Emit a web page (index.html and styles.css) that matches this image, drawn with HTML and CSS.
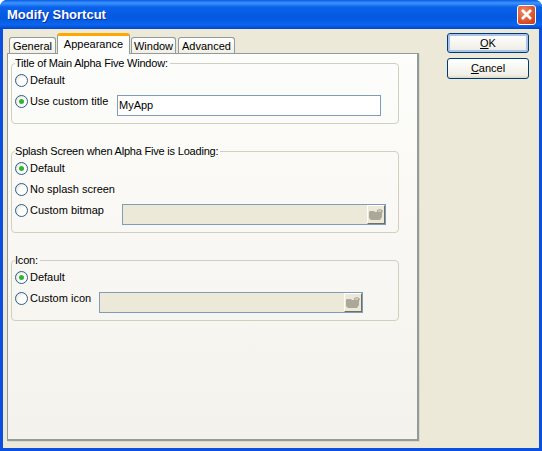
FILE: index.html
```html
<!DOCTYPE html>
<html lang="en">

<head>
    <meta charset="UTF-8">
    <title>Modify Shortcut</title>
    <link rel="stylesheet" href="styles.css">
</head>

<body>
    <div class="window">
        <div class="titlebar">
            <span class="title">Modify Shortcut</span>
            <span class="close">
                <svg width="13" height="13" viewBox="0 0 13 13">
                    <path d="M2 2 L11 11 M11 2 L2 11" stroke="#fff" stroke-width="2.6" fill="none" />
                </svg>
            </span>
        </div>
        <div class="content">
            <div class="main">
                <div class="tabs">
                    <div class="tab tab-general">General</div>
                    <div class="tab tab-active">Appearance</div>
                    <div class="tab tab-window">Window</div>
                    <div class="tab tab-advanced">Advanced</div>
                </div>
                <div class="panel">
                    <fieldset class="group">
                        <legend>Title of Main Alpha Five Window:</legend>
                        <div class="row"><span class="radio"></span><span>Default</span></div>
                        <div class="row">
                            <span class="radio checked"></span><span>Use custom title</span>
                            <input type="text" class="textbox" value="MyApp">
                        </div>
                    </fieldset>
                    <fieldset class="group">
                        <legend>Splash Screen when Alpha Five is Loading:</legend>
                        <div class="row"><span class="radio checked"></span><span>Default</span></div>
                        <div class="row"><span class="radio"></span><span>No splash screen</span></div>
                        <div class="row">
                            <span class="radio"></span><span>Custom bitmap</span>
                            <div class="picker picker-bitmap">
                                <button class="browse">
                                    <svg width="14" height="13" viewBox="0 0 14 13">
                                        <path d="M0 4 L1 3 L5 3 L6 4 L8 4 L8 2 L11 1 L13 2 L14 3 L13 5 L13 9 L11 12 L2 12 L0 10 Z" fill="#aca899" />
                                        <path d="M9 3 L12 3" stroke="#ece9d8" fill="none" />
                                    </svg>
                                </button>
                            </div>
                        </div>
                    </fieldset>
                    <fieldset class="group">
                        <legend>Icon:</legend>
                        <div class="row"><span class="radio checked"></span><span>Default</span></div>
                        <div class="row">
                            <span class="radio"></span><span>Custom icon</span>
                            <div class="picker picker-icon">
                                <button class="browse">
                                    <svg width="14" height="13" viewBox="0 0 14 13">
                                        <path d="M0 4 L1 3 L5 3 L6 4 L8 4 L8 2 L11 1 L13 2 L14 3 L13 5 L13 9 L11 12 L2 12 L0 10 Z" fill="#aca899" />
                                        <path d="M9 3 L12 3" stroke="#ece9d8" fill="none" />
                                    </svg>
                                </button>
                            </div>
                        </div>
                    </fieldset>
                </div>
            </div>
            <div class="side">
                <button class="btn btn-default"><u>O</u>K</button>
                <button class="btn btn-cancel"><u>C</u>ancel</button>
            </div>
        </div>
    </div>
</body>

</html>
```

FILE: styles.css
```css
html,
body {
    margin: 0;
    padding: 0;
    background: #fff;
}

body {
    font-family: "Liberation Sans", Arial, sans-serif;
    font-size: 11px;
    line-height: 13px;
    color: #000;
}

.window {
    width: 542px;
    height: 451px;
    box-sizing: border-box;
    display: flex;
    flex-direction: column;
    border-radius: 7px 7px 0 0;
    overflow: hidden;
    background: #0a4fe0;
}

.titlebar {
    height: 29px;
    flex: none;
    display: flex;
    align-items: center;
    justify-content: space-between;
    padding: 0 6px 0 7px;
    background: linear-gradient(to bottom, #0a5be4 0, #3d95ff 3px, #0a62ea 7px, #0558e0 18px, #0a66f0 25px, #0443c4 29px);
}

.title {
    color: #fff;
    font-weight: bold;
    font-size: 13px;
    text-shadow: 1px 1px 0 #0a2f9c;
}

.close {
    width: 19px;
    height: 20px;
    box-sizing: border-box;
    display: flex;
    align-items: center;
    justify-content: center;
    border: 1px solid #fff;
    border-radius: 3px;
    background: radial-gradient(circle at 35% 30%, #ee8a68, #d9502a 65%, #c23a18);
}

.content {
    flex: 1;
    display: flex;
    margin: 0 3px 3px;
    padding: 4px 4px 0 4px;
    background: #ece9d8;
}

.main {
    width: 412px;
    flex: none;
}

.tabs {
    display: flex;
    align-items: flex-end;
    height: 20px;
    padding-left: 2px;
}

.tab {
    height: 16px;
    box-sizing: border-box;
    border: 1px solid #919b9c;
    border-bottom: 0;
    border-radius: 3px 3px 0 0;
    background: linear-gradient(to bottom, #fff, #f1efe4);
    text-align: center;
    line-height: 16px;
    margin-right: 2px;
}

.tab-general {
    width: 47px;
    margin-right: 1px;
}

.tab-active {
    width: 73px;
    height: 21px;
    line-height: 17px;
    border-top: 3px solid #ffa800;
    background: #fdfdfb;
    position: relative;
    margin-bottom: -1px;
    margin-right: 1px;
}

.tab-window {
    width: 45px;
}

.tab-advanced {
    width: 57px;
}

.panel {
    height: 388px;
    box-sizing: border-box;
    border: 1px solid #919b9c;
    border-right: 2px solid #919b9c;
    border-bottom: 2px solid #919b9c;
    background: linear-gradient(to bottom, #fdfdfb 0, #f4f2ec 100%);
    padding: 3px 18px 0 3px;
    box-shadow: 1px 1px 0 #dcd9c8;
}

.group {
    margin: 0 0 21px;
    padding: 0 0 11px 3px;
    border: 1px solid #d0d0bf;
    border-radius: 4px;
    min-inline-size: 0;
}

.group legend {
    padding: 0 2px 0 0;
    line-height: 13px;
    letter-spacing: -0.2px;
}

.row {
    display: flex;
    align-items: center;
    height: 21px;
    gap: 2px;
}

.radio {
    width: 13px;
    height: 13px;
    box-sizing: border-box;
    flex: none;
    border: 1px solid #2c5f8a;
    border-radius: 50%;
    background: radial-gradient(circle at 65% 65%, #fff 40%, #d8d5c8);
    display: flex;
    align-items: center;
    justify-content: center;
}

.radio.checked::after {
    content: "";
    width: 5px;
    height: 5px;
    border-radius: 50%;
    background: #2fb52f;
}

.textbox {
    width: 264px;
    height: 21px;
    box-sizing: border-box;
    border: 1px solid #7f9db9;
    background: #fff;
    font: inherit;
    padding: 0 1px;
    margin: 7px 17px 0 auto;
    outline: none;
}

.picker {
    width: 264px;
    height: 21px;
    box-sizing: border-box;
    border: 1px solid #7f9db9;
    background: #ece9d8;
    display: flex;
    justify-content: flex-end;
    margin-top: 7px;
    margin-left: auto;
}

.picker-bitmap {
    margin-right: 12px;
}

.picker-icon {
    margin-right: 35px;
}

.browse {
    width: 18px;
    height: 19px;
    padding: 0;
    box-sizing: border-box;
    border: 1px solid;
    border-color: #fff #716f64 #716f64 #fff;
    background: #ece9d8;
    display: flex;
    align-items: center;
    justify-content: center;
}

.side {
    margin-left: 28px;
    display: flex;
    flex-direction: column;
    gap: 5px;
}

.btn {
    width: 82px;
    height: 20px;
    box-sizing: border-box;
    padding: 0;
    font: inherit;
    border: 1px solid #003c74;
    border-radius: 3px;
    background: linear-gradient(to bottom, #fff, #f0efe6 85%, #dcd8c8);
}

.btn-default {
    box-shadow: inset 0 0 0 2px #a9c4ec;
}

.btn-cancel {
    height: 21px;
}
```
